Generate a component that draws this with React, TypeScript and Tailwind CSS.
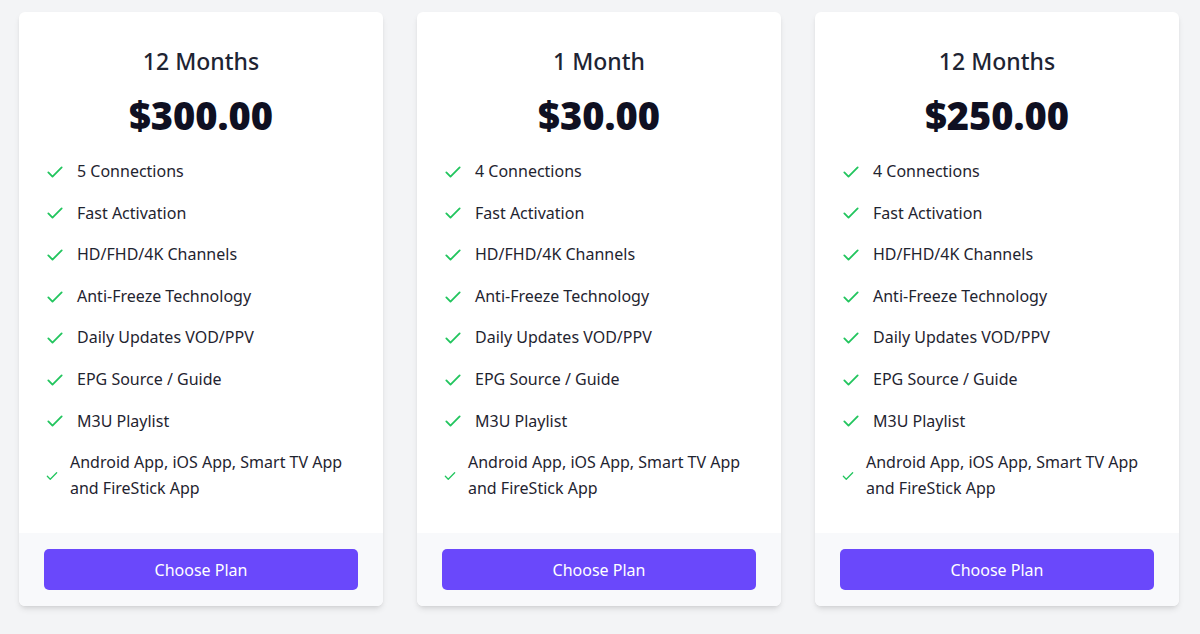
import React from "react";

const features = [
  "Fast Activation",
  "HD/FHD/4K Channels",
  "Anti-Freeze Technology",
  "Daily Updates VOD/PPV",
  "EPG Source / Guide",
  "M3U Playlist",
];

const plans = [
  { title: "12 Months", price: "$300.00", conn: "5 Connections" },
  { title: "1 Month", price: "$30.00", conn: "4 Connections" },
  { title: "12 Months", price: "$250.00", conn: "4 Connections" },
];

function Check({ small }: { small?: boolean }) {
  return (
    <svg
      viewBox="0 0 24 24"
      className={small ? "w-[14px] h-[14px] shrink-0" : "w-[20px] h-[20px] shrink-0"}
      fill="none"
      stroke="#22c55e"
      strokeWidth={2.2}
      strokeLinecap="round"
      strokeLinejoin="round"
    >
      <path d="M4 12.5l5 5L20 6.5" />
    </svg>
  );
}

export default function App() {
  return (
    <div
      className="w-[1200px] h-[634px] bg-[#f3f4f6] pl-[19px] pt-[12px] flex gap-[34px] items-start"
      style={{ fontFamily: '"Noto Sans", "Open Sans", sans-serif' }}
    >
      {plans.map((p, i) => (
        <div key={i} className="w-[364px] bg-white rounded-md shadow-md overflow-hidden flex flex-col">
          <div className="pt-[33px] px-6 pb-8">
            <h2 className="text-center text-[23px] leading-8 font-medium text-[#1e2433]">{p.title}</h2>
            <div className="mt-[18px] text-center text-[38px] leading-10 font-black text-[#0f1022]">{p.price}</div>
            <ul className="mt-6 flex flex-col gap-4 text-[16px] leading-[1.6] text-[#1f2430]">
              {[p.conn, ...features].map((f) => (
                <li key={f} className="flex items-center pl-[2px]">
                  <Check />
                  <span className="ml-[12px]">{f}</span>
                </li>
              ))}
              <li className="flex items-center pl-[2px]">
                <Check small />
                <span className="ml-[11px]">Android App, iOS App, Smart TV App and FireStick App</span>
              </li>
            </ul>
          </div>
          <div className="bg-[#f8f9fb] px-[25px] pt-[16px] pb-[16px]">
            <button className="w-full h-[41px] rounded-[5px] bg-[#6a48fb] text-white text-[16px]">Choose Plan</button>
          </div>
        </div>
      ))}
    </div>
  );
}
